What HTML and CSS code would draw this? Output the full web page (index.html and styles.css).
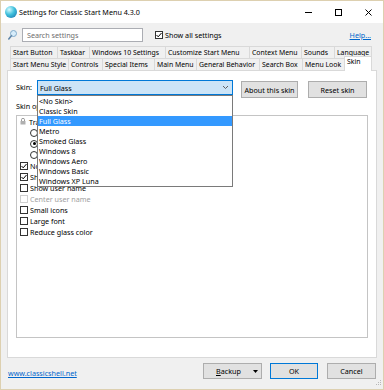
FILE: index.html
```html
<!DOCTYPE html>
<html lang="en">
<head>
    <meta charset="UTF-8">
    <title>Settings for Classic Start Menu 4.3.0</title>
    <link rel="stylesheet" href="styles.css">
</head>
<body>
    <div class="window">
        <div class="titlebar">
            <span class="app-icon"></span>
            <span class="title">Settings for Classic Start Menu 4.3.0</span>
            <div class="caption">
                <span><svg width="7" height="7" viewBox="0 0 7 7"><line x1="0" y1="3.5" x2="7" y2="3.5" stroke="#000"/></svg></span>
                <span><svg width="7" height="7" viewBox="0 0 7 7"><rect x="0.5" y="0.5" width="6" height="6" fill="none" stroke="#000"/></svg></span>
                <span><svg width="7" height="7" viewBox="0 0 7 7"><path d="M0.5 0.5 L6.5 6.5 M6.5 0.5 L0.5 6.5" stroke="#000"/></svg></span>
            </div>
        </div>

        <div class="toolbar">
            <svg class="search-icon" width="9" height="10" viewBox="0 0 9 10">
                <circle cx="5.5" cy="3.5" r="3" fill="#d6ecfa" stroke="#7fa9c9"/>
                <line x1="3.4" y1="5.8" x2="0.8" y2="9" stroke="#5f87aa" stroke-width="1.6" stroke-linecap="round"/>
            </svg>
            <div class="search">Search settings</div>
            <label class="check show-all"><span class="box checked"><svg width="6" height="6" viewBox="0 0 6 6"><polyline points="0.5,3 2.2,4.8 5.5,1" fill="none" stroke="#000"/></svg></span>Show all settings</label>
            <a class="help" href="#">Help...</a>
        </div>

        <div class="tabs">
            <div class="tab-row row1">
                <div class="tab">Start Button</div>
                <div class="tab">Taskbar</div>
                <div class="tab">Windows 10 Settings</div>
                <div class="tab">Customize Start Menu</div>
                <div class="tab">Context Menu</div>
                <div class="tab">Sounds</div>
                <div class="tab">Language</div>
            </div>
            <div class="tab-row row2">
                <div class="tab">Start Menu Style</div>
                <div class="tab">Controls</div>
                <div class="tab">Special Items</div>
                <div class="tab">Main Menu</div>
                <div class="tab">General Behavior</div>
                <div class="tab">Search Box</div>
                <div class="tab">Menu Look</div>
                <div class="tab active">Skin</div>
            </div>
        </div>

        <div class="panel">
            <div class="skin-row">
                <span class="lbl">Skin:</span>
                <div class="combo">
                    <span>Full Glass</span>
                    <svg width="5" height="3" viewBox="0 0 5 3"><polyline points="0,0 2.5,2.5 5,0" fill="none" stroke="#606060"/></svg>
                </div>
                <button class="btn about">About this skin</button>
                <button class="btn reset">Reset skin</button>
            </div>
            <div class="opts-label">Skin options:</div>

            <div class="tree">
                <div class="row">
                    <svg class="lock" width="6" height="7" viewBox="0 0 6 7">
                        <path d="M1.5 3 V1.8 A1.5 1.5 0 0 1 4.5 1.8 V3" fill="none" stroke="#9a9a9a"/>
                        <rect x="0.5" y="3" width="5" height="3.5" fill="#b0b0b0"/>
                    </svg>
                    <span>Transparency</span>
                </div>
                <div class="row sub"><span class="radio"></span><span>Glass</span></div>
                <div class="row sub"><span class="radio on"></span><span>Opaque</span></div>
                <div class="row sub"><span class="radio"></span><span>Solid</span></div>
                <div class="row"><span class="box checked"><svg width="6" height="6" viewBox="0 0 6 6"><polyline points="0.5,3 2.2,4.8 5.5,1" fill="none" stroke="#000"/></svg></span><span>No icon frames</span></div>
                <div class="row"><span class="box checked"><svg width="6" height="6" viewBox="0 0 6 6"><polyline points="0.5,3 2.2,4.8 5.5,1" fill="none" stroke="#000"/></svg></span><span>Show user picture</span></div>
                <div class="row"><span class="box"></span><span>Show user name</span></div>
                <div class="row disabled"><span class="box"></span><span>Center user name</span></div>
                <div class="row"><span class="box"></span><span>Small icons</span></div>
                <div class="row"><span class="box"></span><span>Large font</span></div>
                <div class="row"><span class="box"></span><span>Reduce glass color</span></div>
            </div>

            <ul class="dropdown">
                <li>&lt;No Skin&gt;</li>
                <li>Classic Skin</li>
                <li class="selected">Full Glass</li>
                <li>Metro</li>
                <li>Smoked Glass</li>
                <li>Windows 8</li>
                <li>Windows Aero</li>
                <li>Windows Basic</li>
                <li>Windows XP Luna</li>
            </ul>
        </div>

        <div class="footer">
            <a class="site" href="#">www.classicshell.net</a>
            <button class="btn backup"><span><u>B</u>ackup</span><svg width="5" height="3" viewBox="0 0 5 3"><polygon points="0,0 5,0 2.5,3" fill="#000"/></svg></button>
            <button class="btn ok">OK</button>
            <button class="btn cancel">Cancel</button>
        </div>

        <svg class="grip" width="8" height="8" viewBox="0 0 8 8" fill="#b8b8b8">
            <rect x="6" y="0" width="1" height="1"/>
            <rect x="4" y="2" width="1" height="1"/><rect x="6" y="2" width="1" height="1"/>
            <rect x="2" y="4" width="1" height="1"/><rect x="4" y="4" width="1" height="1"/><rect x="6" y="4" width="1" height="1"/>
        </svg>
    </div>
</body>
</html>
```

FILE: styles.css
```css
* { box-sizing: border-box; }
body { margin: 0; background: #fff; font-family: "Noto Sans", "DejaVu Sans", sans-serif; font-size: 7.2px; color: #000; }
.window { position: relative; width: 384px; height: 390px; border: 1px solid #ddd0b0; background: #f0f0f0; display: flex; flex-direction: column; }

/* title bar */
.titlebar { height: 22px; background: #fff; display: flex; align-items: center; }
.app-icon { width: 12px; height: 12px; margin-left: 4px; border-radius: 50%; background: radial-gradient(circle at 35% 30%, #d6fbff, #3fc0dc 45%, #1769a6); }
.title { margin-left: 2px; }
.caption { margin-left: auto; display: flex; }
.caption span { width: 30px; height: 22px; display: flex; align-items: center; justify-content: center; }

/* search row */
.toolbar { height: 23px; display: flex; align-items: center; }
.search-icon { margin-left: 7px; }
.search { width: 121px; height: 14px; margin-left: 5px; border: 1px solid #abadb3; background: #fff; color: #6d6d6d; padding-left: 4px; line-height: 12px; }
.check { display: flex; align-items: center; }
.show-all { margin-left: 12px; }
.show-all .box { margin-right: 2px; }
.help { margin-left: auto; margin-right: 12px; color: #0066cc; }

/* checkbox / radio */
.box { width: 8px; height: 8px; border: 1px solid #333; background: #fff; display: flex; align-items: center; justify-content: center; flex: none; }
.radio { width: 8px; height: 8px; border: 1px solid #333; border-radius: 50%; background: #fff; position: relative; flex: none; }
.radio.on::after { content: ""; position: absolute; left: 1.5px; top: 1.5px; width: 3px; height: 3px; border-radius: 50%; background: #000; }

/* tabs */
.tabs { padding-left: 9px; height: 24px; }
.tab-row { display: grid; height: 12px; }
.row1 { grid-template-columns: 47px 32px 76px 84px 52px 33px 38px; }
.row2 { grid-template-columns: 58px 34px 52px 42px 63px 43px 42px 28px; }
.tab { border-top: 1px solid #d9d9d9; border-left: 1px solid #d9d9d9; padding-left: 2px; font-size: 6.9px; line-height: 11px; white-space: nowrap; overflow: hidden; }
.tab:last-child { border-right: 1px solid #d9d9d9; }
.tab.active { background: #fff; margin-top: -2px; height: 15px; line-height: 10px; position: relative; z-index: 1; }

/* tab page */
.panel { position: relative; margin-left: 6px; width: 370px; height: 288px; background: #fff; border: 1px solid #d9d9d9; padding: 9px 0 0 8px; }
.skin-row { display: flex; align-items: flex-start; height: 18px; }
.lbl { width: 21px; line-height: 15px; }
.combo { width: 196px; height: 15px; border: 1px solid #0078d7; background: #cce4f7; padding: 0 4px 0 2px; display: flex; justify-content: space-between; align-items: center; }
.btn { height: 17px; border: 1px solid #adadad; background: #e1e1e1; font: inherit; color: #000; padding: 0; }
.about { width: 57px; margin: 1px 0 0 8px; }
.reset { width: 59px; margin: 1px 0 0 10px; }
.opts-label { margin-top: 3px; line-height: 11px; }

.tree { margin-top: 3px; width: 352px; height: 223px; border: 1px solid #c4c4c4; }
.row { height: 11px; display: flex; align-items: center; padding-left: 3px; gap: 2px; white-space: nowrap; }
.row.sub { padding-left: 13px; }
.row .lock { margin-right: 1px; }
.row.disabled { color: #a0a0a0; }
.row.disabled .box { border-color: #cfcfcf; }

.dropdown { position: absolute; left: 29px; top: 24px; width: 196px; margin: 0; padding: 0; list-style: none; background: #fff; border: 1px solid #7a7a7a; z-index: 2; }
.dropdown li { height: 10px; line-height: 10px; padding-left: 1px; }
.dropdown li.selected { background: #3399ff; color: #fff; }

/* bottom buttons */
.footer { flex: 1; display: flex; align-items: flex-start; padding: 5px 7px 0 7px; }
.site { color: #0066cc; line-height: 16px; margin-top: 2px; }
.footer .btn { height: 16px; }
.backup { width: 59px; margin-left: auto; display: flex; align-items: center; justify-content: space-between; padding: 0 3px 0 12px; }
.ok { width: 48px; margin-left: 8px; border-color: #0078d7; }
.cancel { width: 49px; margin-left: 9px; }
.grip { position: absolute; right: 1px; bottom: 1px; }
```
